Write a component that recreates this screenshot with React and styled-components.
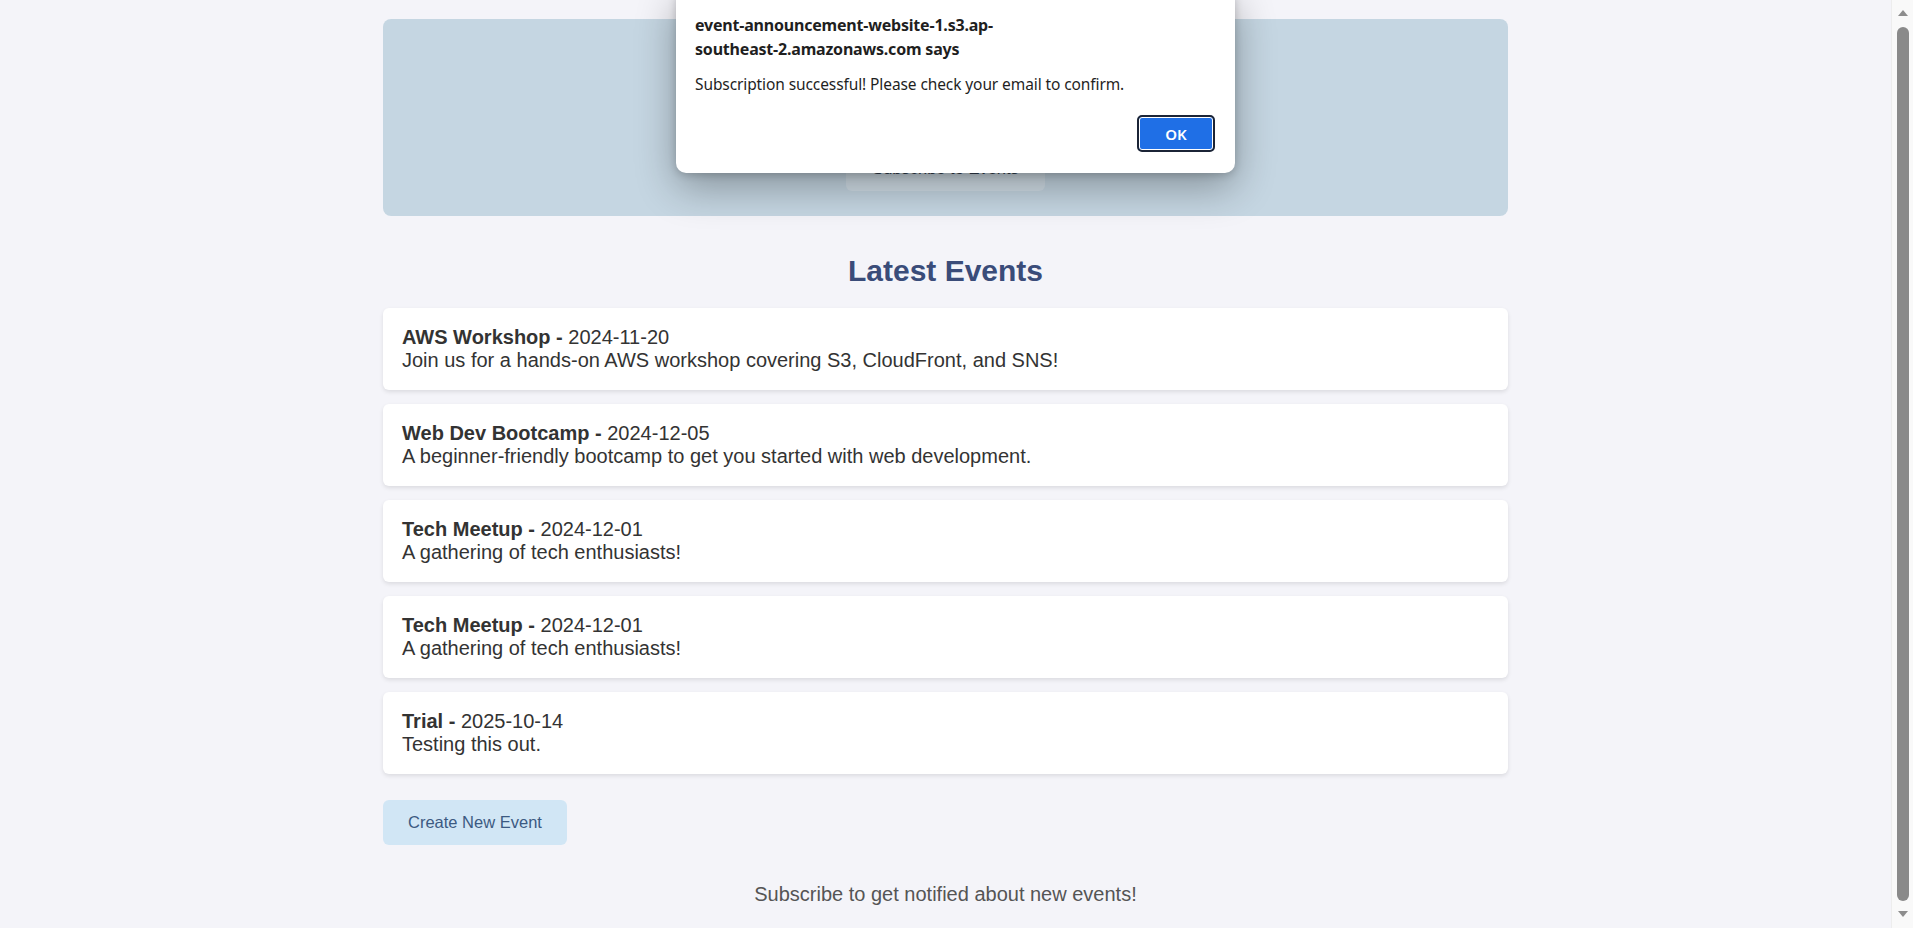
import React from "react";
import styled, { createGlobalStyle } from "styled-components";

const GlobalStyle = createGlobalStyle`
  html, body {
    margin: 0;
    padding: 0;
    height: 100%;
    overflow: hidden;
    background: #f4f4f9;
  }
  * { box-sizing: border-box; }
`;

const Shell = styled.div`
  display: flex;
  height: 928px;
  width: 100%;
  font-family: "Liberation Sans", Arial, sans-serif;
  color: #333;
`;

const Page = styled.div`
  position: relative;
  flex: 1;
  overflow: hidden;
  background: #f4f4f9;
`;

const Container = styled.main`
  width: 1125px;
  margin: 0 auto;
  padding-top: 19px;
  display: flex;
  flex-direction: column;
`;

const Hero = styled.header`
  background: #c5d6e2;
  border-radius: 8px;
  padding: 69px 20px 25px;
  display: flex;
  flex-direction: column;
  align-items: center;
  height: 197px;
`;

const EmailInput = styled.input`
  width: 420px;
  height: 40px;
  border: 1px solid #b8c6d2;
  border-radius: 5px;
  padding: 0 12px;
  font-family: inherit;
  font-size: 16px;
`;

const Button = styled.button`
  border: none;
  border-radius: 6px;
  height: 45px;
  padding: 0 25px;
  font-family: "Liberation Sans", Arial, sans-serif;
  font-size: 16.5px;
  color: ${(p) => (p.$muted ? "#33414f" : "#3c5a82")};
  background: ${(p) => (p.$muted ? "#d2dfe8" : "#d1e6f5")};
  cursor: pointer;
`;

const HeroButton = styled(Button)`
  margin-top: 18px;
  width: 199px;
`;

const SectionTitle = styled.h2`
  margin: 38px 0 20px;
  text-align: center;
  font-size: 30px;
  font-weight: 700;
  line-height: 34px;
  color: #3a4c79;
`;

const EventList = styled.ul`
  list-style: none;
  margin: 0;
  padding: 0;
  display: flex;
  flex-direction: column;
  gap: 14px;
`;

const EventCard = styled.li`
  background: #fff;
  border-radius: 6px;
  box-shadow: 0 2px 4px rgba(0, 0, 0, 0.1);
  padding: 18px 19px;
  font-size: 20px;
  line-height: 23px;
  color: #333;
  height: 82px;
`;

const EventName = styled.strong`
  font-weight: 700;
`;

const ActionRow = styled.div`
  margin-top: 26px;
  display: flex;
`;

const Footer = styled.footer`
  margin-top: 38px;
  text-align: center;
  font-size: 20px;
  line-height: 23px;
  color: #555;
`;

const Scrollbar = styled.div`
  width: 22px;
  flex: none;
  background: #f9f9f9;
  border-left: 1px solid #ededed;
  display: flex;
  flex-direction: column;
  align-items: center;
  padding: 10px 0 11px;
`;

const Arrow = styled.div`
  width: 0;
  height: 0;
  border-left: 5px solid transparent;
  border-right: 5px solid transparent;
  ${(p) =>
    p.$down
      ? "border-top: 6px solid #8d8d8d;"
      : "border-bottom: 6px solid #8d8d8d;"}
`;

const Thumb = styled.div`
  width: 12px;
  flex: 1;
  margin: 11px 0 10px;
  background: #8a8a8a;
  border-radius: 6px;
`;

const Dialog = styled.div`
  position: absolute;
  top: -10px;
  left: 676px;
  width: 559px;
  height: 183px;
  background: #fff;
  border-radius: 10px;
  box-shadow: 0 14px 40px rgba(0, 0, 0, 0.32), 0 2px 8px rgba(0, 0, 0, 0.18);
  padding: 23px 20px 21px 19px;
  display: flex;
  flex-direction: column;
  font-family: "Noto Sans", "Open Sans", sans-serif;
  color: #1f1f1f;
`;

const DialogTitle = styled.div`
  font-size: 16px;
  font-weight: 700;
  line-height: 24px;
  width: 300px;
  letter-spacing: -0.2px;
`;

const DialogMessage = styled.div`
  margin-top: 13px;
  font-size: 15.5px;
  line-height: 20px;
  letter-spacing: -0.1px;
`;

const DialogActions = styled.div`
  margin-top: auto;
  display: flex;
  justify-content: flex-end;
`;

const OkButton = styled.button`
  width: 78px;
  height: 37px;
  border: 2px solid #1b2436;
  border-radius: 5px;
  box-shadow: inset 0 0 0 1px #ffffff;
  background: #1f6fe6;
  color: #fff;
  font-family: "Noto Sans", "Open Sans", sans-serif;
  font-size: 15px;
  font-weight: 600;
`;

const events = [
  {
    name: "AWS Workshop",
    date: "2024-11-20",
    description:
      "Join us for a hands-on AWS workshop covering S3, CloudFront, and SNS!",
  },
  {
    name: "Web Dev Bootcamp",
    date: "2024-12-05",
    description:
      "A beginner-friendly bootcamp to get you started with web development.",
  },
  {
    name: "Tech Meetup",
    date: "2024-12-01",
    description: "A gathering of tech enthusiasts!",
  },
  {
    name: "Tech Meetup",
    date: "2024-12-01",
    description: "A gathering of tech enthusiasts!",
  },
  { name: "Trial", date: "2025-10-14", description: "Testing this out." },
];

export default function App() {
  return (
    <>
      <GlobalStyle />
      <Shell>
        <Page>
          <Container>
            <Hero>
              <EmailInput type="email" aria-label="Email" />
              <HeroButton $muted>Subscribe to Events</HeroButton>
            </Hero>
            <SectionTitle>Latest Events</SectionTitle>
            <EventList>
              {events.map((e, i) => (
                <EventCard key={i}>
                  <EventName>{e.name} - </EventName>
                  {e.date}
                  <br />
                  {e.description}
                </EventCard>
              ))}
            </EventList>
            <ActionRow>
              <Button>Create New Event</Button>
            </ActionRow>
            <Footer>Subscribe to get notified about new events!</Footer>
          </Container>
          <Dialog role="alertdialog">
            <DialogTitle>
              event-announcement-website-1.s3.ap-southeast-2.amazonaws.com says
            </DialogTitle>
            <DialogMessage>
              Subscription successful! Please check your email to confirm.
            </DialogMessage>
            <DialogActions>
              <OkButton>OK</OkButton>
            </DialogActions>
          </Dialog>
        </Page>
        <Scrollbar>
          <Arrow />
          <Thumb />
          <Arrow $down />
        </Scrollbar>
      </Shell>
    </>
  );
}
